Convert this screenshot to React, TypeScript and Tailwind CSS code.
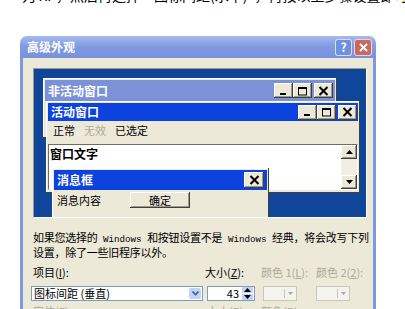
import React from "react";

const raised =
  "bg-[#ece9d8] shadow-[inset_-1px_-1px_#404040,inset_1px_1px_#ffffff,inset_-2px_-2px_#9d9a8c]";

const CJK = "font-['Noto_Sans_CJK_SC','Noto_Sans',sans-serif]";

type Glyph = "min" | "max" | "close" | "up" | "down";

const GlyphIcon = ({ kind }: { kind: Glyph }) => {
  if (kind === "min")
    return (
      <svg width="10" height="10" viewBox="0 0 10 10">
        <rect x="1" y="7" width="6" height="2" fill="#000" />
      </svg>
    );
  if (kind === "max")
    return (
      <svg width="11" height="10" viewBox="0 0 11 10">
        <rect x="1.5" y="1.5" width="8" height="7.5" fill="none" stroke="#000" />
        <rect x="1" y="1" width="9" height="2" fill="#000" />
      </svg>
    );
  if (kind === "close")
    return (
      <svg width="11" height="10" viewBox="0 0 11 10">
        <path d="M1.5 1 L9.5 9 M9.5 1 L1.5 9" stroke="#000" strokeWidth="2" />
      </svg>
    );
  if (kind === "up")
    return (
      <svg width="7" height="4" viewBox="0 0 7 4">
        <path d="M3.5 0 L7 4 L0 4 Z" fill="#000" />
      </svg>
    );
  return (
    <svg width="7" height="4" viewBox="0 0 7 4">
      <path d="M0 0 L7 0 L3.5 4 Z" fill="#000" />
    </svg>
  );
};

const CaptionButton = ({ kind, className = "" }: { kind: Glyph; className?: string }) => (
  <div className={`${raised} w-[19px] h-[15px] flex items-center justify-center ${className}`}>
    <GlyphIcon kind={kind} />
  </div>
);

const CaptionButtons = () => (
  <div className="flex items-center">
    <CaptionButton kind="min" />
    <CaptionButton kind="max" />
    <CaptionButton kind="close" className="ml-[2px]" />
  </div>
);

const Preview = () => (
  <div className="relative w-[334px] h-[150px] bg-[#0f4699] border border-t-[#9d9a8c] border-l-[#9d9a8c] border-b-white border-r-white overflow-hidden">
    {/* 非活动窗口 */}
    <div className="absolute left-[9px] top-[9px] w-[294px] h-[60px] bg-[#ece9d8] p-[2px] shadow-[inset_-1px_-1px_#404040,inset_1px_1px_#ffffff]">
      <div className="h-[21px] bg-[#7b92d8] flex items-center justify-between pl-[3px] pr-[2px]">
        <span className="text-white text-[12px] font-bold leading-none">非活动窗口</span>
        <CaptionButtons />
      </div>
    </div>

    {/* 活动窗口 */}
    <div className="absolute left-[12px] top-[32px] w-[314px] h-[92px] bg-[#ece9d8] p-[2px] shadow-[inset_-1px_-1px_#404040,inset_1px_1px_#ffffff]">
      <div className="h-[18px] bg-[#0c42dd] flex items-center justify-between pl-[3px] pr-[1px]">
        <span className="text-white text-[12px] font-bold leading-none">活动窗口</span>
        <CaptionButtons />
      </div>
      <div className="h-[18px] flex items-center gap-[9px] pl-[5px] text-[11px] leading-none">
        <span className="text-black">正常</span>
        <span className="text-[#aca899]">无效</span>
        <span className="text-black">已选定</span>
      </div>
      <div className="mt-[5px] h-[46px] bg-white flex border border-t-[#716f64] border-l-[#716f64] border-b-white border-r-white">
        <div className="flex-1 pl-[1px] pt-[3px] text-[12px] font-bold leading-none">窗口文字</div>
        <div className="w-[16px] flex flex-col bg-[#f1efe2]">
          <div className={`${raised} h-[14px] flex items-center justify-center`}>
            <GlyphIcon kind="up" />
          </div>
          <div className="flex-1" />
          <div className={`${raised} h-[14px] flex items-center justify-center`}>
            <GlyphIcon kind="down" />
          </div>
        </div>
      </div>
    </div>

    {/* 消息框 */}
    <div className="absolute left-[18px] top-[99px] w-[217px] h-[50px] bg-[#ece9d8] p-[2px] shadow-[inset_-1px_-1px_#404040,inset_1px_1px_#ffffff]">
      <div className="h-[20px] bg-[#0c42dd] flex items-center justify-between pl-[3px] pr-[3px]">
        <span className="text-white text-[12px] font-bold leading-none">消息框</span>
        <div className={`${raised} w-[20px] h-[16px] flex items-center justify-center`}>
          <GlyphIcon kind="close" />
        </div>
      </div>
      <div className="flex items-center pl-[3px] pt-[2px]">
        <span className="text-[11px] leading-none w-[73px]">消息内容</span>
        <div className={`${raised} w-[60px] h-[16px] flex items-center justify-center text-[11px] leading-none`}>
          确定
        </div>
      </div>
    </div>
  </div>
);

const ColorButton = () => (
  <div className="w-[34px] h-[15px] border border-[#c9c7ba] bg-[#f4f3ee] flex items-center justify-end pr-[3px] gap-[3px]">
    <div className="w-px h-[9px] bg-[#c9c7ba]" />
    <svg width="5" height="3" viewBox="0 0 5 3">
      <path d="M0 0 L5 0 L2.5 3 Z" fill="#aca899" />
    </svg>
  </div>
);

const Win = () => (
  <span className="font-['Liberation_Mono',monospace] text-[9.2px] tracking-normal whitespace-pre"> Windows </span>
);

export default function App() {
  return (
    <div className={`w-[405px] h-[309px] overflow-hidden bg-white ${CJK}`}>
      <p className="-mt-[13px] ml-[22px] text-[14px] leading-[16px] whitespace-nowrap text-black">
        为 XP，然后再选择“图标间距(水平)”，再按以上步骤设置即可。
      </p>

      <div className="ml-[20px] mt-[33px] w-[356px] rounded-t-[7px] overflow-hidden">
        <div className="h-[22px] bg-gradient-to-b from-[#a7baee] via-[#7f99e1] to-[#7892dc] flex items-center justify-between pl-[7px] pr-[4px]">
          <span className="text-white text-[12px] font-bold leading-none">高级外观</span>
          <div className="flex gap-[2px]">
            <div className="w-[17px] h-[17px] rounded-[3px] bg-[#6f8fe0] border border-white/70 flex items-center justify-center text-white text-[12px] font-bold leading-none">
              ?
            </div>
            <div className="w-[18px] h-[17px] rounded-[3px] bg-[#c66a63] border border-white/70 flex items-center justify-center">
              <svg width="9" height="9" viewBox="0 0 9 9">
                <path d="M1 1 L8 8 M8 1 L1 8" stroke="#fff" strokeWidth="1.8" />
              </svg>
            </div>
          </div>
        </div>

        <div className="h-[260px] bg-[#ece9d8] border-x-[3px] border-[#7f98df] pl-[10px] pt-[10px]">
          <Preview />

          <p className="mt-[13px] text-[11px] leading-[12px] tracking-[-0.25px] whitespace-nowrap text-black">
            如果您选择的<Win />和按钮设置不是<Win />经典，将会改写下列
            <br />
            设置，除了一些旧程序以外。
          </p>

          <div className="mt-[9px] flex text-[11px] leading-none">
            <div className="w-[174px] -ml-[2px]">
              <div className="pl-[2px] h-[11px]">
                项目(<span className="underline">I</span>):
              </div>
              <div className="mt-[8px] w-[172px] h-[15px] bg-white border border-[#7f9db9] flex items-center justify-between pl-[2px] pr-[1px]">
                <span>图标间距 (垂直)</span>
                <div className="w-[12px] h-[11px] rounded-[2px] bg-[#c1d3fb] flex items-center justify-center">
                  <svg width="7" height="5" viewBox="0 0 7 5">
                    <path d="M0.5 0.5 L3.5 3.5 L6.5 0.5" stroke="#4d6185" strokeWidth="1.6" fill="none" />
                  </svg>
                </div>
              </div>
              <div className="mt-[5px] pl-[2px] text-[#aca899]">
                字体(<span className="underline">F</span>):
              </div>
            </div>

            <div className="w-[56px]">
              <div className="h-[11px]">
                大小(<span className="underline">Z</span>):
              </div>
              <div className="mt-[8px] ml-[2px] w-[48px] h-[15px] bg-white border border-[#7f9db9] flex items-center justify-end">
                <span className="pr-[3px]">43</span>
                <div className="w-[12px] h-[13px] flex flex-col gap-px pr-px">
                  <div className="flex-1 rounded-[1px] bg-[#c1d3fb] flex items-center justify-center">
                    <GlyphIcon kind="up" />
                  </div>
                  <div className="flex-1 rounded-[1px] bg-[#c1d3fb] flex items-center justify-center">
                    <GlyphIcon kind="down" />
                  </div>
                </div>
              </div>
              <div className="mt-[5px] pl-[2px] text-[#aca899]">
                大小(<span className="underline">E</span>):
              </div>
            </div>

            <div className="w-[55px] text-[#aca899]">
              <div className="h-[11px]">
                颜色 1(<span className="underline">L</span>):
              </div>
              <div className="mt-[8px] ml-[2px]">
                <ColorButton />
              </div>
              <div className="mt-[5px]">
                颜色(<span className="underline">R</span>):
              </div>
            </div>

            <div className="w-[55px] text-[#aca899]">
              <div className="h-[11px]">
                颜色 2(<span className="underline">2</span>):
              </div>
              <div className="mt-[8px]">
                <ColorButton />
              </div>
            </div>
          </div>
        </div>
      </div>
    </div>
  );
}
